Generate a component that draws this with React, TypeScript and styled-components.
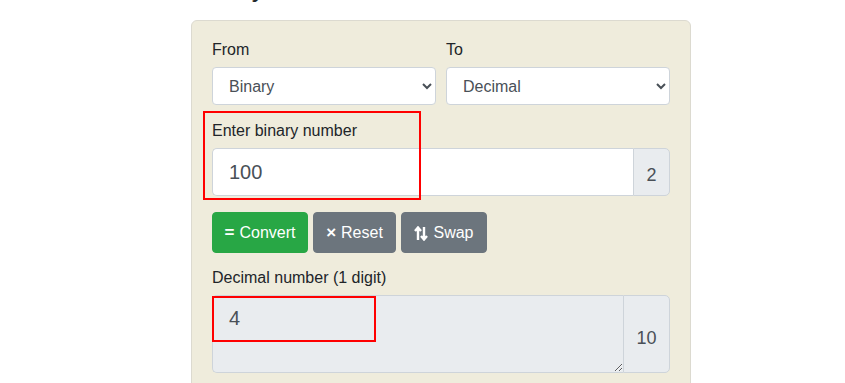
import React from "react";
import styled, { createGlobalStyle } from "styled-components";

const Global = createGlobalStyle`
  html, body { margin: 0; padding: 0; background: #fff; }
  body {
    font-family: "Liberation Sans", Arial, sans-serif;
    color: #212529;
    font-size: 16px;
    overflow: hidden;
  }
  * { box-sizing: border-box; }
`;

const Page = styled.div`
  width: 845px;
  height: 383px;
  padding-left: 191px;
  overflow: hidden;
`;

const Heading = styled.h2`
  margin: -29px 0 15px;
  font-size: 26px;
  line-height: 34px;
  font-weight: 500;
  color: #212529;
`;

const Card = styled.div`
  position: relative;
  width: 500px;
  background: #efecdc;
  border: 1px solid #dcdad0;
  border-radius: 6px;
  padding: 16px 20px 30px;
`;

const Row = styled.div`
  display: grid;
  grid-template-columns: 224px 224px;
  gap: 10px;
`;

const Field = styled.div<{ $mb?: number }>`
  display: flex;
  flex-direction: column;
  margin-bottom: ${(p) => p.$mb ?? 13}px;
`;

const Label = styled.label`
  line-height: 24px;
  padding-top: 1px;
  margin-bottom: 5px;
  font-size: 16px;
  color: #212529;
`;

const Select = styled.select`
  height: 38px;
  width: 100%;
  font-family: "Liberation Sans", Arial, sans-serif;
  font-size: 16px;
  color: #495057;
  background: #fff;
  border: 1px solid #ced4da;
  border-radius: 4px;
  padding: 0 8px 0 12px;
`;

const Group = styled.div`
  display: flex;
  width: 458px;
`;

const Input = styled.input`
  flex: 1;
  min-width: 0;
  height: 48px;
  font-family: "Liberation Sans", Arial, sans-serif;
  font-size: 20px;
  color: #495057;
  background: #fff;
  border: 1px solid #ced4da;
  border-right: none;
  border-radius: 5px 0 0 5px;
  padding: 0 16px;
  outline: none;
`;

const TextArea = styled.textarea`
  flex: 1;
  min-width: 0;
  height: 78px;
  font-family: "Liberation Sans", Arial, sans-serif;
  font-size: 20px;
  line-height: 30px;
  color: #495057;
  background: #e9ecef;
  border: 1px solid #ced4da;
  border-right: none;
  border-radius: 5px 0 0 5px;
  padding: 7px 16px 9px;
  outline: none;
  resize: vertical;
`;

const Addon = styled.span<{ $w: number; $pt: number }>`
  width: ${(p) => p.$w}px;
  display: flex;
  align-items: center;
  justify-content: center;
  background: #e9ecef;
  border: 1px solid #ced4da;
  border-radius: 0 5px 5px 0;
  font-size: 18px;
  color: #495057;
  padding-top: ${(p) => p.$pt}px;
`;

const Buttons = styled.div`
  display: flex;
  gap: 5px;
  margin: 16px 0 12px;
`;

const Button = styled.button<{ $bg: string; $w: number }>`
  height: 41px;
  width: ${(p) => p.$w}px;
  display: inline-flex;
  align-items: center;
  justify-content: center;
  gap: 5px;
  background: ${(p) => p.$bg};
  color: #fff;
  border: 1px solid ${(p) => p.$bg};
  border-radius: 4px;
  font-family: "Liberation Sans", Arial, sans-serif;
  font-size: 16px;
  padding: 1px 10px 0;
`;

const Sym = styled.b`
  font-weight: 700;
  font-size: 17px;
`;

const RedBox = styled.div<{ $x: number; $y: number; $w: number; $h: number }>`
  position: absolute;
  left: ${(p) => p.$x}px;
  top: ${(p) => p.$y}px;
  width: ${(p) => p.$w}px;
  height: ${(p) => p.$h}px;
  border: 2px solid #ff0000;
  pointer-events: none;
`;

const SwapIcon = () => (
  <svg width="14" height="15" viewBox="0 0 14 15" fill="none">
    <path d="M4 14V2.5M1 5l3-3.5L7 5" stroke="#fff" strokeWidth="2.4" strokeLinejoin="miter" />
    <path d="M10 1v11.5M7 10l3 3.5 3-3.5" stroke="#fff" strokeWidth="2.4" strokeLinejoin="miter" />
  </svg>
);

export default function App() {
  return (
    <>
      <Global />
      <Page>
        <Heading>Binary converter</Heading>
        <Card>
          <Row>
            <Field>
              <Label>From</Label>
              <Select defaultValue="Binary">
                <option>Binary</option>
                <option>Decimal</option>
                <option>Octal</option>
                <option>Hexadecimal</option>
              </Select>
            </Field>
            <Field>
              <Label>To</Label>
              <Select defaultValue="Decimal">
                <option>Binary</option>
                <option>Decimal</option>
                <option>Octal</option>
                <option>Hexadecimal</option>
              </Select>
            </Field>
          </Row>
          <Field $mb={0}>
            <Label>Enter binary number</Label>
            <Group>
              <Input defaultValue="100" />
              <Addon $w={37} $pt={6}>2</Addon>
            </Group>
          </Field>
          <Buttons>
            <Button $bg="#28a745" $w={96}>
              <Sym>=</Sym>Convert
            </Button>
            <Button $bg="#6c757d" $w={83}>
              <Sym>×</Sym>Reset
            </Button>
            <Button $bg="#6c757d" $w={86}>
              <SwapIcon />Swap
            </Button>
          </Buttons>
          <Field $mb={0}>
            <Label>Decimal number (1 digit)</Label>
            <Group>
              <TextArea readOnly defaultValue="4" />
              <Addon $w={47} $pt={8}>10</Addon>
            </Group>
          </Field>
          <RedBox $x={11} $y={90} $w={218} $h={89} />
          <RedBox $x={20} $y={275} $w={164} $h={46} />
        </Card>
      </Page>
    </>
  );
}
